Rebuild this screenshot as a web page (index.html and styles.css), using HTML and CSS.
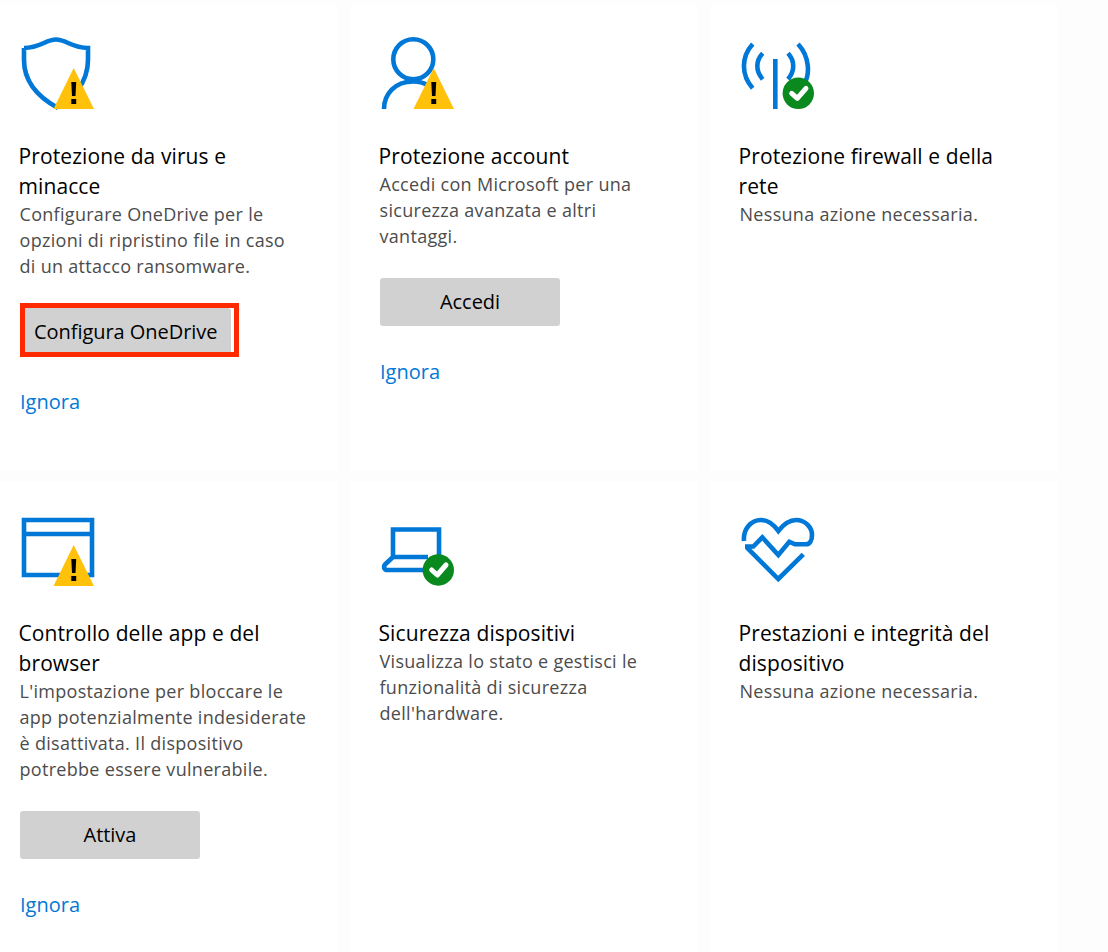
FILE: index.html
```html
<!DOCTYPE html>
<html lang="it">
<head>
<meta charset="utf-8">
<title>Sicurezza di Windows</title>
<link rel="stylesheet" href="styles.css">
</head>
<body>
<main class="grid">
  <section class="card">
    <svg class="icon" viewBox="20 30 80 80" aria-hidden="true">
      <path class="line" d="M24 48C40 48 46 39.5 56 39.5C66 39.5 72 48 88 48V60C88 70 85 80 78 90M24 48V60C24 80 36 96 58 108"/>
      <path class="warn" d="M73.7 68L94 109H53.5Z"/>
      <path class="mark" d="M71.3 82H76.2L75.5 96H72ZM71.3 99H76.2V104H71.3Z"/>
    </svg>
    <h2 class="title">Protezione da virus e<br>minacce</h2>
    <p class="desc">Configurare OneDrive per le<br>opzioni di ripristino file in caso<br>di un attacco ransomware.</p>
    <div class="action">
      <button class="btn">Configura OneDrive</button>
      <span class="highlight"></span>
    </div>
    <a class="link" href="#">Ignora</a>
  </section>

  <section class="card">
    <svg class="icon" viewBox="380 30 80 80" aria-hidden="true">
      <circle class="line" cx="413.3" cy="59.3" r="20"/>
      <path class="line" d="M384 109C384 94 395 81.5 413 81.5C425 81.5 432 87 440 95"/>
      <path class="warn" d="M433.7 68L454 109H413.5Z"/>
      <path class="mark" d="M431.3 82H436.2L435.5 96H432ZM431.3 99H436.2V104H431.3Z"/>
    </svg>
    <h2 class="title">Protezione account</h2>
    <p class="desc">Accedi con Microsoft per una<br>sicurezza avanzata e altri<br>vantaggi.</p>
    <div class="action"><button class="btn">Accedi</button></div>
    <a class="link" href="#">Ignora</a>
  </section>

  <section class="card">
    <svg class="icon" viewBox="740 30 80 80" aria-hidden="true">
      <path class="line" d="M775.3 59V109M752.7 44C741 57 741 75 752.7 88.3M762.7 53.3C755.5 61 755.5 71 762.7 79.3M798 44C810 57 810 75 804 84M788 53.3C795 61 795 71 788 79.3"/>
      <circle class="ok" cx="798.3" cy="93.3" r="15.7"/>
      <path class="tick" d="M791.7 93.3L797.3 98.3L806 88.3"/>
    </svg>
    <h2 class="title">Protezione firewall e della<br>rete</h2>
    <p class="desc">Nessuna azione necessaria.</p>
  </section>

  <section class="card">
    <svg class="icon" viewBox="20 507 80 80" aria-hidden="true">
      <path class="line" d="M24 520H92V575H24ZM24 534H92"/>
      <path class="warn" d="M73.7 545L94 586H53.5Z"/>
      <path class="mark" d="M71.3 559H76.2L75.5 573H72ZM71.3 576H76.2V581H71.3Z"/>
    </svg>
    <h2 class="title">Controllo delle app e del<br>browser</h2>
    <p class="desc">L'impostazione per bloccare le<br>app potenzialmente indesiderate<br>è disattivata. Il dispositivo<br>potrebbe essere vulnerabile.</p>
    <div class="action"><button class="btn">Attiva</button></div>
    <a class="link" href="#">Ignora</a>
  </section>

  <section class="card">
    <svg class="icon" viewBox="380 507 80 80" aria-hidden="true">
      <path class="line" d="M393 557V529.5H439V557M393 557H428M393 557L385.5 564C383 566.5 384 570 387.5 570H428"/>
      <circle class="ok" cx="438.3" cy="570" r="15.7"/>
      <path class="tick" d="M431.7 570L437.3 575L446 565"/>
    </svg>
    <h2 class="title">Sicurezza dispositivi</h2>
    <p class="desc">Visualizza lo stato e gestisci le<br>funzionalità di sicurezza<br>dell'hardware.</p>
  </section>

  <section class="card">
    <svg class="icon" viewBox="740 507 80 80" aria-hidden="true">
      <path class="line" d="M744 541C743 529 751 520 761 520C768 520 774 525 778.3 531C783 525 789 520 796 520C806 520 812 528 812 535C812 540 810 544.3 806 544.3H795L789.3 541.7L778.3 555L762.3 537.3L753.3 546.5H745M746.7 547.3L778.3 579L803.3 554.3"/>
    </svg>
    <h2 class="title">Prestazioni e integrità del<br>dispositivo</h2>
    <p class="desc">Nessuna azione necessaria.</p>
  </section>
</main>
</body>
</html>
```

FILE: styles.css
```css
* { box-sizing: border-box; }
html, body { margin: 0; padding: 0; background: #fdfdfd; height: 100%; overflow: hidden; }
body { font-family: "Open Sans", "Noto Sans", sans-serif; color: #000; }
.grid {
  display: grid;
  grid-template-columns: 348px 348px 348px;
  grid-template-rows: 465px 470px;
  gap: 12px;
  margin: 5px 0 0 -10px;
}
.card { background: #fff; padding: 25px 30px 0; }
.icon { display: block; width: 80px; height: 80px; margin-bottom: 31px; }
.line { fill: none; stroke: #0078d7; stroke-width: 4.6; }
.warn { fill: #ffc10a; }
.mark { fill: #000; }
.ok { fill: #0a8a1e; }
.tick { fill: none; stroke: #fff; stroke-width: 5; stroke-linecap: round; stroke-linejoin: round; }
.title { margin: 0 0 0 -1.5px; font-size: 21px; font-weight: 400; line-height: 30px; letter-spacing: 0.1px; }
.desc { margin: 0 0 0 -0.5px; font-size: 18px; line-height: 26px; color: #4c4c4c; letter-spacing: 0.3px; }
.action { position: relative; display: flex; margin-top: 29px; width: fit-content; }
.btn {
  min-width: 180px; height: 48px; padding: 0 14px;
  border: 0; border-radius: 3px; background: #d1d1d1; color: #000;
  font: 400 20px/48px "Open Sans", "Noto Sans", sans-serif; letter-spacing: -0.05px;
}
.highlight { position: absolute; left: 0; top: -5px; width: 219px; height: 54px; border: 5px solid #ff2a00; }
.link { display: block; margin-top: 33px; font-size: 20px; line-height: 26px; color: #0078d7; text-decoration: none; }
```
